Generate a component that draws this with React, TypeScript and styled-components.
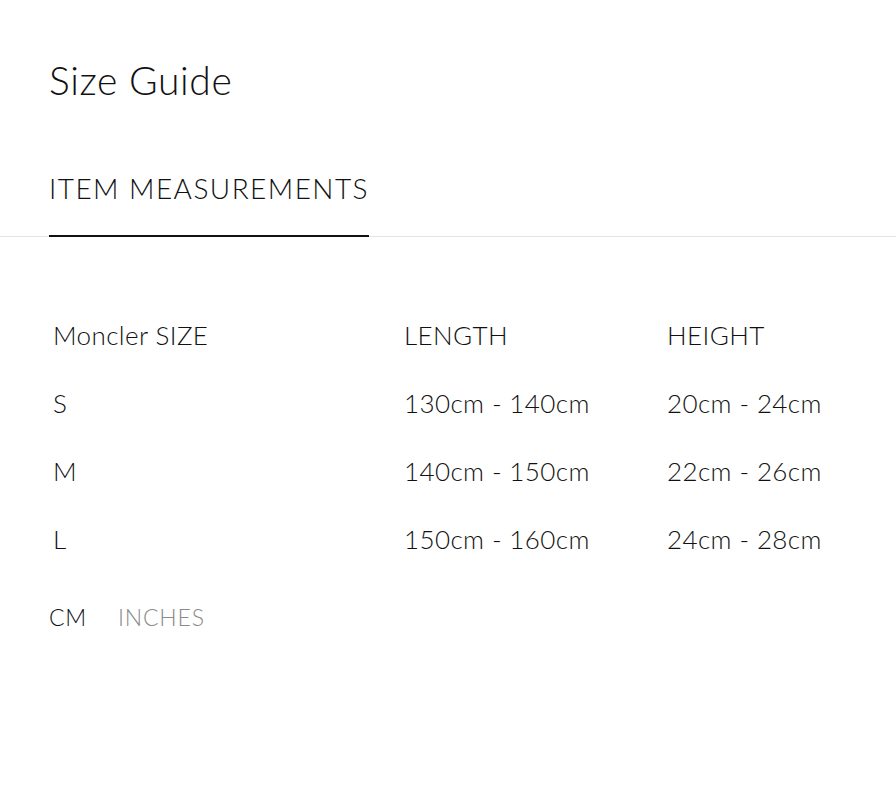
import styled, { createGlobalStyle } from 'styled-components';
import { useState } from 'react';

const GlobalStyle = createGlobalStyle`
  html, body {
    margin: 0;
    padding: 0;
    background: #fff;
  }
  body {
    font-family: Lato, "Open Sans", sans-serif;
    font-weight: 300;
    color: #111;
  }
`;

const Page = styled.div`
  width: 896px;
  height: 806px;
  background: #fff;
  overflow: hidden;
`;

const Title = styled.h1`
  margin: 0;
  padding: 57px 49px 0;
  font-size: 39px;
  font-weight: 300;
  line-height: 46px;
  letter-spacing: 0.6px;
`;

const TabBar = styled.div`
  display: flex;
  margin-top: 68px;
  padding: 0 49px;
  border-bottom: 1px solid #e4e4e4;
`;

const Tab = styled.button<{ active?: boolean }>`
  background: none;
  border: none;
  margin: 0 0 -1px;
  padding: 0 0 30px;
  font-family: inherit;
  font-weight: 300;
  font-size: 28px;
  letter-spacing: 1.45px;
  line-height: 34px;
  color: #111;
  border-bottom: 2px solid ${p => (p.active ? '#111' : 'transparent')};
`;

const Table = styled.div`
  display: grid;
  grid-template-columns: 351px 263px 1fr;
  grid-auto-rows: 68px;
  padding: 64px 0 0 53px;
`;

const Cell = styled.div`
  display: flex;
  align-items: center;
  font-size: 26px;
  letter-spacing: 0.4px;
  color: #111;
`;

const Units = styled.div`
  display: flex;
  gap: 31px;
  padding: 30px 49px 0;
`;

const Unit = styled.span<{ active?: boolean }>`
  font-size: 23px;
  line-height: 28px;
  letter-spacing: 0.8px;
  color: ${p => (p.active ? '#111' : '#8a8a8a')};
  cursor: pointer;
`;

const rows = [
  ['Moncler SIZE', 'LENGTH', 'HEIGHT'],
  ['S', '130cm - 140cm', '20cm - 24cm'],
  ['M', '140cm - 150cm', '22cm - 26cm'],
  ['L', '150cm - 160cm', '24cm - 28cm'],
];

const App = () => {
  const [unit, setUnit] = useState('CM');

  return (
    <Page>
      <GlobalStyle />
      <Title>Size Guide</Title>
      <TabBar>
        <Tab active>ITEM MEASUREMENTS</Tab>
      </TabBar>
      <Table>
        {rows.map((row, i) =>
          row.map((cell, j) => <Cell key={`${i}-${j}`}>{cell}</Cell>)
        )}
      </Table>
      <Units>
        {['CM', 'INCHES'].map(u => (
          <Unit key={u} active={u === unit} onClick={() => setUnit(u)}>
            {u}
          </Unit>
        ))}
      </Units>
    </Page>
  );
};

export default App;
